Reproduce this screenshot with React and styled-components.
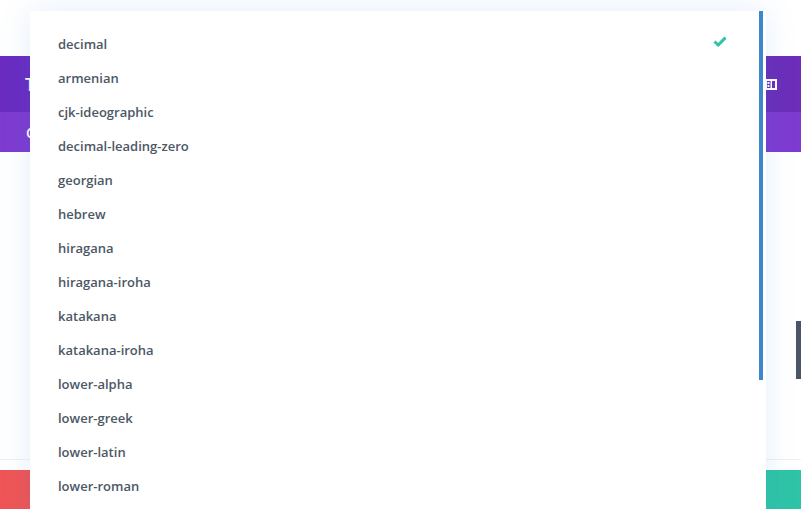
import { useState } from "react";
import styled, { createGlobalStyle } from "styled-components";

const Global = createGlobalStyle`
  html, body { margin: 0; padding: 0; background: #fff; }
  body { font-family: "Open Sans", "Liberation Sans", sans-serif; overflow: hidden; }
`;

const Page = styled.div`
  position: relative;
  width: 801px;
  height: 509px;
  overflow: hidden;
  background: #fff;
`;

const Modal = styled.div`
  display: flex;
  flex-direction: column;
  margin-top: 56px;
  height: 453px;
`;

const Header = styled.div`
  height: 56px;
  background: linear-gradient(90deg, #6a2cc0 0%, #6c2eb9 100%);
  display: flex;
  align-items: center;
  justify-content: space-between;
  padding: 0 24px 0 25px;
  color: #fff;
  font-size: 18px;
  font-weight: 600;
`;

const Tabs = styled.div`
  height: 40px;
  background: #7e3bd0;
  display: flex;
  align-items: center;
  padding-left: 26px;
  color: #fff;
  font-size: 14px;
  font-weight: 600;
`;

const Body = styled.div`
  flex: 1;
  display: flex;
  justify-content: flex-end;
  align-items: flex-start;
  padding-top: 169px;
  border-bottom: 1px solid #eef0f3;
  margin-bottom: 10px;
`;

const SideTab = styled.div`
  width: 5px;
  height: 58px;
  background: #4a5668;
`;

const Footer = styled.div`
  height: 39px;
  display: flex;
`;

const FooterButton = styled.div`
  flex: 1;
  background: ${p => p.bg};
`;

const Menu = styled.div`
  position: absolute;
  top: 11px;
  left: 30px;
  width: 736px;
  height: 520px;
  background: #fff;
  box-shadow: 0 0 30px rgba(43, 135, 218, 0.13);
  padding-top: 16px;
  box-sizing: border-box;
`;

const Scrollbar = styled.div`
  position: absolute;
  top: 0;
  right: 3px;
  width: 4px;
  height: 369px;
  background: #3e86cc;
`;

const Item = styled.div`
  height: 34px;
  display: flex;
  align-items: center;
  justify-content: space-between;
  padding: 0 39px 0 28px;
  font-size: 13px;
  font-weight: 600;
  color: #4c5866;
`;

const CheckWrap = styled.span`
  display: flex;
  margin-top: -5px;
`;

const items = [
  "decimal",
  "armenian",
  "cjk-ideographic",
  "decimal-leading-zero",
  "georgian",
  "hebrew",
  "hiragana",
  "hiragana-iroha",
  "katakana",
  "katakana-iroha",
  "lower-alpha",
  "lower-greek",
  "lower-latin",
  "lower-roman",
];

function Check() {
  return (
    <CheckWrap>
      <svg width="14" height="11" viewBox="0 0 14 11">
        <path d="M1.5 5.5 L5.2 9 L12.5 1.6" fill="none" stroke="#2fc4a6" strokeWidth="3" />
      </svg>
    </CheckWrap>
  );
}

function LayoutIcon() {
  return (
    <svg width="12" height="11" viewBox="0 0 12 11">
      <rect x="1" y="1" width="10" height="9" fill="none" stroke="#fff" strokeWidth="2" />
      <rect x="2.5" y="3" width="2" height="2" fill="#fff" />
      <rect x="2.5" y="6" width="2" height="2" fill="#fff" />
      <rect x="5.5" y="1" width="1.5" height="9" fill="#fff" />
    </svg>
  );
}

export default function App() {
  const [selected] = useState("decimal");
  return (
    <Page>
      <Global />
      <Modal>
        <Header>
          <span>Text Settings</span>
          <LayoutIcon />
        </Header>
        <Tabs>Content</Tabs>
        <Body>
          <SideTab />
        </Body>
        <Footer>
          <FooterButton bg="#ef5555" />
          <FooterButton bg="#2fc4a6" />
        </Footer>
      </Modal>
      <Menu>
        <Scrollbar />
        {items.map(name => (
          <Item key={name}>
            <span>{name}</span>
            {name === selected && <Check />}
          </Item>
        ))}
      </Menu>
    </Page>
  );
}
